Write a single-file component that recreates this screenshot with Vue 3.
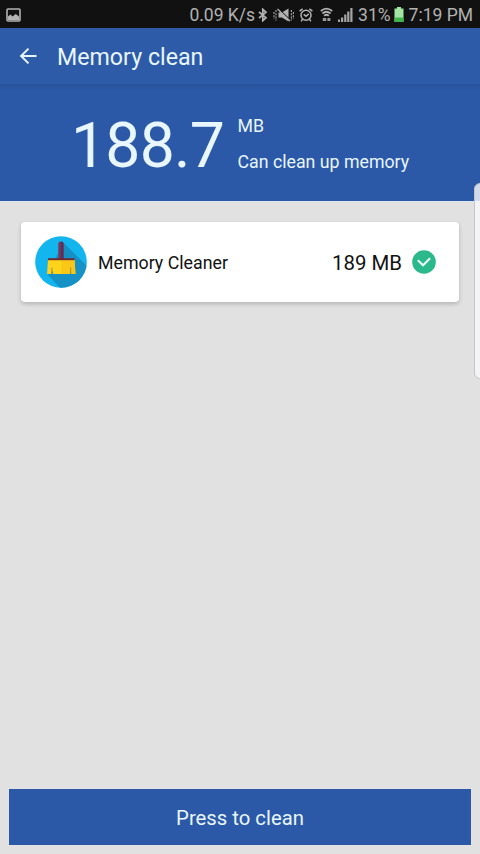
<template>
  <div class="screen">
    <div class="status">
      <svg class="st-pic" width="15" height="14" viewBox="0 0 15 14">
        <rect x="1" y="1" width="13" height="12" rx="1" fill="none" stroke="#b2b2b2" stroke-width="1.6" />
        <path d="M2 8.500l2.500-2 2 2 3.200-2.600L13 8.500V12H2z" fill="#b2b2b2" />
      </svg>
      <span class="speed">0.09 K/s</span>
      <svg class="st-bt" width="10" height="14" viewBox="0 0 10 14" fill="none" stroke="#b2b2b2" stroke-width="1.7">
        <path d="M1 4l7 5.700-3.200 3V1.300L8 4.300 1 10" />
      </svg>
      <svg class="st-mute" width="22" height="14" viewBox="0 0 22 14">
        <path d="M5.500 4.400h3.400L15.500.5v13L8.900 9.600H5.500z" fill="#b2b2b2" />
        <path d="M5.300.8l11.500 11" stroke="#111" stroke-width="1.2" />
        <path d="M4.500 1l12.500 12" stroke="#b2b2b2" stroke-width="1.3" />
        <path d="M3 2v10.500M1 4v7M18.400 2v10.500M20.400 4v7" stroke="#a0a0a0" stroke-width="1.2" stroke-dasharray="2 1.200" />
      </svg>
      <svg class="st-alarm" width="14" height="14" viewBox="0 0 14 14" fill="none" stroke="#b2b2b2" stroke-width="1.5">
        <circle cx="7" cy="7.300" r="5" />
        <path d="M4.700 6.400L7 8.300l2.700-2.400M.6 3.200L3.600.8M13.400 3.200L10.400.8M3.500 11.200l-1.300 2.100M10.500 11.200l1.300 2.100" />
      </svg>
      <svg class="st-wifi" width="13" height="15" viewBox="0 0 13 15" fill="none" stroke="#b2b2b2" stroke-width="1.7">
        <path d="M.8 4Q6.500-.8 12.200 4M2.400 6.500Q6.500 3 10.600 6.500M4.200 8.800Q6.500 6.700 8.800 8.800" />
        <path d="M2.800 11h3.400v3H2.800zM7.400 11h3v3h-3z" fill="#9a9a9a" stroke="none" />
      </svg>
      <svg class="st-signal" width="15" height="14" viewBox="0 0 15 14">
        <path d="M0 11.500h2V14H0zM3 9.500h2.200V14H3zM6.200 6.500h2.200V14H6.200zM9.200 3.500h2.200V14H9.200zM12.300 0h2.200v14h-2.200z" fill="#a6a6a6" />
      </svg>
      <span class="pct">31%</span>
      <svg class="st-batt" width="10" height="15" viewBox="0 0 10 15">
        <path d="M3 0h4v1.500h2.500V15H.5V1.500H3z" fill="#a3e6a4" />
        <path d="M.5 10.500h9V15H.5z" fill="#3fb64b" />
      </svg>
      <span class="clock">7:19 PM</span>
    </div>

    <div class="toolbar">
      <svg width="18" height="18" viewBox="0 0 18 18" fill="none" stroke="#e6f6ff" stroke-width="2">
        <path d="M17.500 9H2.500M9.500 1.600L2.100 9l7.400 7.400" />
      </svg>
      <span class="title">Memory clean</span>
    </div>

    <div class="summary">
      <span class="amount">{{ amount }}</span>
      <div class="labels">
        <span>MB</span>
        <span>Can clean up memory</span>
      </div>
    </div>

    <div class="content">
      <div v-for="item in items" :key="item.name" class="card" @click="item.checked = !item.checked">
        <svg width="52" height="52" viewBox="0 0 52 52">
          <defs>
            <clipPath id="disc"><circle cx="26" cy="26" r="25.800" /></clipPath>
          </defs>
          <circle cx="26" cy="26" r="25.800" fill="#12b5ee" />
          <path d="M28 6L54 32V54H27L13 39z" fill="#1691c6" clip-path="url(#disc)" />
          <path d="M23.300 24V8.200q0-2.700 2.600-2.700t2.600 2.700V24z" fill="#71395f" />
          <path d="M26 5.500q2.500.1 2.500 2.700V24H26z" fill="#5f2e54" />
          <path d="M13 24h26.500l1 14h-4.200l-.6-4-.6 4H18l-.8-4-.7 4h-4.500z" fill="#fdd31b" />
          <path d="M26.500 24h13l1 14h-4.200l-.6-4-.6 4h-8.600z" fill="#f9c717" />
          <path d="M13 22.200h26.500v2H13z" fill="#6b2a35" />
          <path d="M16.800 31.500v6M35.700 31.500v6" stroke="#8f8240" stroke-width=".8" />
        </svg>
        <span class="name">{{ item.name }}</span>
        <span class="size">{{ item.size }}</span>
        <svg class="check" width="24" height="24" viewBox="0 0 24 24">
          <circle cx="12" cy="12" r="11.800" :fill="item.checked ? '#2bb98c' : '#bdbdbd'" />
          <path d="M5.800 10.300l5.300 5 7-7" fill="none" stroke="#effff8" stroke-width="2" />
        </svg>
      </div>
    </div>

    <button class="clean">Press to clean</button>
    <div class="edge-handle"></div>
  </div>
</template>

<script setup>
import { ref } from 'vue'

const amount = ref('188.7')
const items = ref([
  { name: 'Memory Cleaner', size: '189 MB', checked: true }
])
</script>

<style>
body { margin: 0; background: #e1e1e1; }
</style>

<style scoped>
.screen { position: relative; display: flex; flex-direction: column; width: 480px; height: 854px; overflow: hidden; background: #e1e1e1; font-family: Roboto, "Liberation Sans", sans-serif; color: #e8f6ff; white-space: nowrap; }
.status { display: flex; align-items: center; height: 28px; box-sizing: border-box; padding: 1px 7px 0 6px; background: #111; color: #b2b2b2; font-size: 17.5px; line-height: 28px; }
.status svg { flex: none; }
.speed { margin-left: auto; }
.st-bt { margin-left: 3px; }
.st-mute { margin-left: 5px; }
.st-alarm { margin-left: 4px; }
.st-wifi { margin-left: 7px; }
.st-signal { margin-left: 5px; }
.pct { margin-left: 5px; }
.st-batt { margin-left: 3px; }
.clock { margin-left: 5px; }
.toolbar { display: flex; align-items: center; height: 56px; padding-left: 19px; background: #2d5ba8; }
.title { margin-left: 20px; padding-top: 2px; font-size: 23.2px; }
.summary { display: flex; height: 117px; box-sizing: border-box; padding-left: 71px; background: linear-gradient(#28529a, #2b59a8 6px); }
.amount { font-size: 62.5px; line-height: 123px; letter-spacing: -.8px; }
.labels { display: flex; flex-direction: column; margin-left: 13.5px; padding-top: 24px; font-size: 17.75px; line-height: 36px; }
.content { flex: 1; padding: 20px 21px 0; border-top: 1px solid #dce6f1; }
.card { display: flex; align-items: center; height: 80px; box-sizing: border-box; padding: 0 23px 0 14px; background: #fff; border-radius: 4px; box-shadow: 0 2px 4px rgba(0, 0, 0, .2); color: #111; }
.name { margin-left: 11px; padding-top: 1px; font-size: 17.8px; }
.size { margin-left: auto; padding-top: 2px; font-size: 20.4px; }
.check { margin-left: 10px; }
.clean { height: 56px; margin: 0 9px 9px 9px; border: 0; background: #2b59a8; color: #e8f6ff; font-family: inherit; font-size: 20.3px; padding: 1px 0 0; }
.edge-handle { position: absolute; left: 474px; top: 183px; width: 12px; height: 196px; box-sizing: border-box; border: 1px solid #c4c6ca; border-radius: 6px; background: rgba(248, 248, 250, .82); }
</style>
